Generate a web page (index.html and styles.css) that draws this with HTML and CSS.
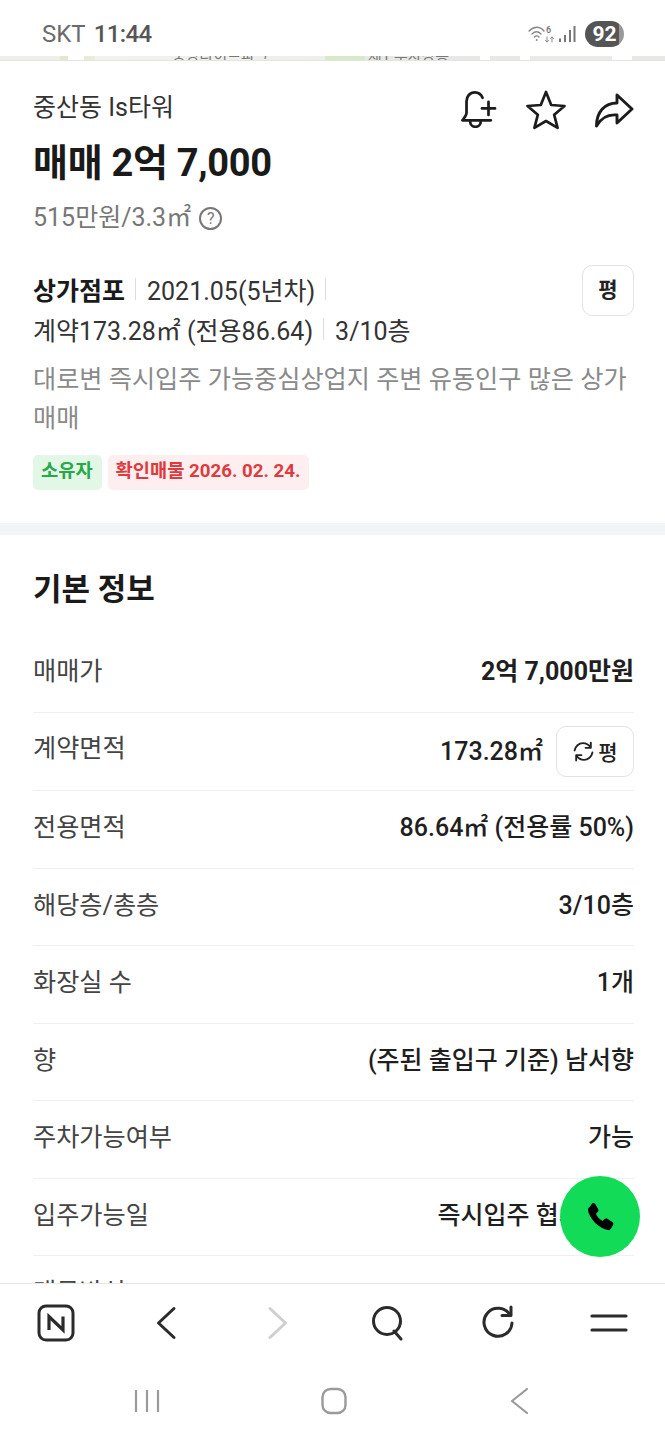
FILE: index.html
```html
<!DOCTYPE html>
<html lang="ko">
<head>
<meta charset="utf-8">
<title>중산동 Is타워</title>
<link rel="stylesheet" href="styles.css">
</head>
<body>
<div class="phone">
  <header class="status">
    <div class="status-left"><span class="carrier">SKT</span><span class="clock">11:44</span></div>
    <div class="status-right">
      <svg class="wifi" width="26" height="20" viewBox="0 0 26 20" fill="none" stroke="#8a8a8a" stroke-width="1.4" stroke-linecap="round"><path d="M1 7c5-5 11-5 15 0"/><path d="M4 10c3-3 6-3 9 0"/><path d="M6.5 13c1.500-1.500 3-1.500 4.500 0"/><circle cx="8.700" cy="16" r="1" fill="#8a8a8a" stroke="none"/><path d="M19 13v5M17.500 16.500l1.500 1.500 1.500-1.500M24 18v-5M22.500 14.500l1.500-1.500 1.500 1.500" stroke-width="1"/><text x="18" y="9" class="wifi-six">6</text></svg>
      <svg class="signal" width="18" height="18" viewBox="0 0 18 18" fill="#777"><rect x="1" y="13.500" width="2" height="3.500"/><rect x="6" y="10" width="2" height="7"/><rect x="11" y="5" width="2" height="12"/><rect x="15.500" y="1" width="2" height="16"/></svg>
      <div class="battery"><span>92</span></div>
    </div>
  </header>
  <div class="map-strip"><span class="map-label">중앙라이프파크</span><span class="map-label map-label-b">제1 주차장동</span></div>
  <main class="content">
    <section class="summary">
      <div class="head-row">
        <div class="building">중산동 Is타워</div>
        <div class="actions">
          <svg width="38" height="38" viewBox="6 3 30 32" fill="none" stroke="#1c1c1e" stroke-width="2.300" stroke-linecap="round" stroke-linejoin="round"><path d="M24 9.500C22.800 6.700 20.300 5 17.500 5 13.300 5 10.500 8.300 10.500 12.500V22c0 2.500-1.500 4-3.500 6.500h24"/><path d="M13.500 29c0 3 1.800 5 4.500 5s4.500-2 4.500-5"/><path d="M29 13v11M23.500 18.500h11"/></svg>
          <svg width="40" height="40" viewBox="0 0 40 40" fill="none" stroke="#1c1c1e" stroke-width="2.700" stroke-linejoin="round"><path d="M20 2l5.200 13 13.300 1-10.300 8.800 3.400 13L20 31l-11.600 6.800 3.400-13L1.500 16l13.300-1z"/></svg>
          <svg width="40" height="40" viewBox="0 0 40 40" fill="none" stroke="#1c1c1e" stroke-width="2.900" stroke-linejoin="round" stroke-linecap="round"><path d="M23 5l15 14-15 14v-8C13 24 7 28 2.500 36c0-14 8-23 20.500-23z"/></svg>
        </div>
      </div>
      <h1 class="price">매매 2억 7,000</h1>
      <div class="unit-price">515만원/3.3㎡<span class="help">?</span></div>
      <div class="spec-block">
        <div class="specs">
          <div class="spec-line"><strong class="spec-type">상가점포</strong><i class="sep"></i><span>2021.05(5년차)</span><i class="sep"></i></div>
          <div class="spec-line"><span>계약173.28㎡ (전용86.64)</span><i class="sep"></i><span>3/10층</span></div>
        </div>
        <button class="unit-btn">평</button>
      </div>
      <p class="desc">대로변 즉시입주 가능중심상업지 주변 유동인구 많은 상가 매매</p>
      <div class="tags"><span class="tag tag-green">소유자</span><span class="tag tag-red">확인매물 2026. 02. 24.</span></div>
    </section>
    <section class="info">
      <h2>기본 정보</h2>
      <dl class="rows">
        <div class="row"><dt>매매가</dt><dd class="strong">2억 7,000만원</dd></div>
        <div class="row row-area"><dt>계약면적</dt><dd><span class="area-value">173.28㎡</span><button class="swap-btn"><svg width="23" height="23" viewBox="0 0 22 22" fill="none" stroke="#222" stroke-width="1.800" stroke-linecap="round" stroke-linejoin="round"><path d="M2.500 10c.7-4 4-7 8-7 3 0 5.500 1.500 7 4"/><path d="M18 2.500V7.500h-5"/><path d="M19.500 12c-.7 4-4 7-8 7-3 0-5.500-1.500-7-4"/><path d="M4 19.500V14.500h5"/></svg>평</button></dd></div>
        <div class="row"><dt>전용면적</dt><dd>86.64㎡ (전용률 50%)</dd></div>
        <div class="row"><dt>해당층/총층</dt><dd>3/10층</dd></div>
        <div class="row"><dt>화장실 수</dt><dd>1개</dd></div>
        <div class="row"><dt>향</dt><dd>(주된 출입구 기준) 남서향</dd></div>
        <div class="row"><dt>주차가능여부</dt><dd>가능</dd></div>
        <div class="row"><dt>입주가능일</dt><dd>즉시입주 협의 가능</dd></div>
        <div class="row"><dt>매물방식</dt><dd></dd></div>
      </dl>
    </section>
  </main>
  <button class="fab" aria-label="전화"><svg width="36" height="36" viewBox="0 0 24 24" fill="#000"><path d="M6.800 3c.7-.5 1.600-.3 2 .4l2 3.500c.4.600.2 1.400-.3 1.800L9.300 9.800c.8 1.900 2.600 3.900 4.500 4.800l1.200-1.200c.5-.5 1.300-.6 1.900-.2l3.300 2.200c.7.400.9 1.300.5 2l-1.500 2.500c-.4.700-1.200 1-2 .8C10.800 19.300 4.900 13 4 7.500c-.1-.8.200-1.600.9-2z"/></svg></button>
  <nav class="browser-bar">
    <svg width="40" height="40" viewBox="0 0 40 40" fill="none"><rect x="3" y="3" width="34" height="34" rx="7" stroke="#2b2b2b" stroke-width="3"/><path d="M13 27V13.500L27 27V13.500" stroke="#2b2b2b" stroke-width="3.200"/></svg>
    <svg width="40" height="40" viewBox="0 0 40 40" fill="none" stroke="#2b2b2b" stroke-width="3" stroke-linecap="round" stroke-linejoin="round"><path d="M27 5.500L11.500 20 27 34.500"/></svg>
    <svg width="40" height="40" viewBox="0 0 40 40" fill="none" stroke="#cfcfcf" stroke-width="3" stroke-linecap="round" stroke-linejoin="round"><path d="M13 5.500L28.500 20 13 34.500"/></svg>
    <svg width="40" height="40" viewBox="0 0 40 40" fill="none" stroke="#2b2b2b" stroke-width="3" stroke-linecap="round"><circle cx="19" cy="18" r="13.500"/><path d="M26 28l7 8"/></svg>
    <svg width="40" height="40" viewBox="0 0 40 40" fill="none" stroke="#2b2b2b" stroke-width="3" stroke-linecap="round" stroke-linejoin="round"><path d="M32 12A14 14 0 1 0 34 20"/><path d="M24 12.500h9V4"/></svg>
    <svg width="40" height="40" viewBox="0 0 40 40" fill="none" stroke="#2b2b2b" stroke-width="3.200" stroke-linecap="round"><path d="M3 13h34M3 27h34"/></svg>
  </nav>
  <nav class="system-nav">
    <svg width="28" height="28" viewBox="0 0 28 28" fill="none" stroke="#9a9a9a" stroke-width="2.200"><path d="M3 3v22M14 3v22M25 3v22"/></svg>
    <svg width="28" height="28" viewBox="0 0 28 28" fill="none" stroke="#9a9a9a" stroke-width="2.400"><rect x="2.500" y="2" width="23" height="24" rx="8"/></svg>
    <svg width="28" height="28" viewBox="0 0 28 28" fill="none" stroke="#9a9a9a" stroke-width="2.200" stroke-linecap="round" stroke-linejoin="round"><path d="M21 2L6 14l15 12"/></svg>
  </nav>
</div>
</body>
</html>
```
FILE: styles.css
```css
* { box-sizing: border-box; }
html, body { margin: 0; padding: 0; }
body { background: #fff; font-family: Roboto, "Noto Sans CJK KR", sans-serif; color: #1c1c1e; }
.phone { position: relative; width: 665px; height: 1440px; display: flex; flex-direction: column; overflow: hidden; background: #fff; }

.status { height: 56px; flex: none; display: flex; justify-content: space-between; align-items: center; padding: 12px 41px 0 42px; }
.status-left { display: flex; gap: 8px; font-size: 24px; color: #6b6b6b; }
.clock { font-weight: 500; color: #555; letter-spacing: -.6px; }
.status-right { display: flex; align-items: center; gap: 4px; }
.wifi-six { font: 600 9px Roboto, sans-serif; fill: #777; stroke: none; }
.battery { width: 39px; height: 26px; margin-left: 5px; border-radius: 13px; background: linear-gradient(90deg, #555 88%, #999 88%); color: #fff; font: 700 21px Roboto, sans-serif; display: flex; align-items: center; justify-content: center; }

.map-strip { height: 5px; flex: none; position: relative; overflow: hidden; background: linear-gradient(90deg, #eeeeea 60px, #dfe8d0 60px, #dfe8d0 68px, #fff 68px, #fff 84px, #e6edda 84px, #e6edda 95px, #f2f2ee 95px, #eeeeea 325px, #d8e8c8 325px, #d8e8c8 365px, #e8e8e6 365px, #e8e8e6 480px, #fff 480px, #fff 490px, #e8e8e6 490px, #e8e8e6 520px, #fff 520px, #fff 530px, #eaeae8 530px, #eaeae8 612px, #fff 612px, #fff 632px, #e8e8e6 632px); border-bottom: 1px solid #e4e4e0; }
.map-label { position: absolute; left: 172px; top: -12px; font-size: 15px; color: #777; white-space: nowrap; }
.map-label-b { left: 368px; }

.content { flex: 1; min-height: 0; overflow: hidden; }
.summary { padding: 28px 31px 33px 33px; border-bottom: 12px solid #f3f4f6; }
.head-row { display: flex; justify-content: space-between; align-items: flex-start; }
.building { font-size: 25px; line-height: 38px; color: #333; }
.actions { display: flex; gap: 28px; margin-top: 1px; }
.price { margin: 8px 0 0; font-size: 38px; line-height: 50px; font-weight: 700; letter-spacing: -.3px; color: #1a1a1a; }
.unit-price { margin-top: 12px; display: flex; align-items: center; font-size: 25px; line-height: 36px; color: #777; }
.help { width: 23px; height: 23px; margin-left: 8px; border: 2px solid #777; border-radius: 50%; font-size: 16px; line-height: 19px; text-align: center; }
.spec-block { margin-top: 33px; display: flex; justify-content: space-between; align-items: flex-start; }
.spec-line { display: flex; align-items: center; height: 40px; font-size: 25px; color: #333; }
.spec-type { font-weight: 700; color: #1a1a1a; }
.sep { width: 1px; height: 22px; background: #ddd; margin: 0 11px 0 10px; }
.unit-btn { width: 52px; height: 51px; margin-top: -4px; background: #fff; border: 1px solid #e2e2e2; border-radius: 10px; font: 700 21px Roboto, "Noto Sans CJK KR", sans-serif; color: #222; padding: 0 0 6px; }
.desc { margin: 11px 0 0; font-size: 25.2px; line-height: 39px; color: #8a8a8a; }
.tags { display: flex; gap: 6px; margin-top: 17px; }
.tag { height: 35px; padding: 0 9px 0 8px; border-radius: 5px; font-size: 18.7px; font-weight: 700; line-height: 33px; }
.tag-green { background: #e3f7e6; color: #27a84a; }
.tag-red { background: #fdeff0; color: #e0393e; }

.info { padding: 30px 31px 0 33px; }
.info h2 { margin: 0; font-size: 31px; line-height: 50px; font-weight: 700; color: #1a1a1a; }
.rows { margin: 20px 0 0; }
.row { height: 77.500px; display: flex; justify-content: space-between; align-items: center; border-bottom: 1px solid #f0f0f0; padding-bottom: 8px; }
.row-area { height: 78.500px; padding-bottom: 0; }
.row-area dt { margin-bottom: 10px; }
.area-value { margin-bottom: 4px; }
.row dt { font-size: 25.200px; color: #444; }
.row dd { margin: 0; display: flex; align-items: center; gap: 13px; font-size: 25px; font-weight: 500; color: #1f1f1f; }
.row dd.strong { font-weight: 700; }
.swap-btn { width: 78px; height: 51px; display: flex; align-items: center; justify-content: center; gap: 3px; background: #fff; border: 1px solid #e2e2e2; border-radius: 10px; font: 500 21px Roboto, "Noto Sans CJK KR", sans-serif; color: #222; padding: 0; }

.fab { position: absolute; left: 560px; top: 1176px; width: 80px; height: 81px; border: 0; border-radius: 50%; background: #12db58; display: flex; align-items: center; justify-content: center; padding: 0; }

.browser-bar { flex: none; height: 78px; display: flex; justify-content: space-between; align-items: center; padding: 0 36px 0 36px; border-top: 1px solid #e8e8e8; background: #fff; }
.system-nav { flex: none; height: 79px; display: flex; justify-content: space-between; align-items: center; padding: 0 131px 0 133px; background: #fff; }
```
